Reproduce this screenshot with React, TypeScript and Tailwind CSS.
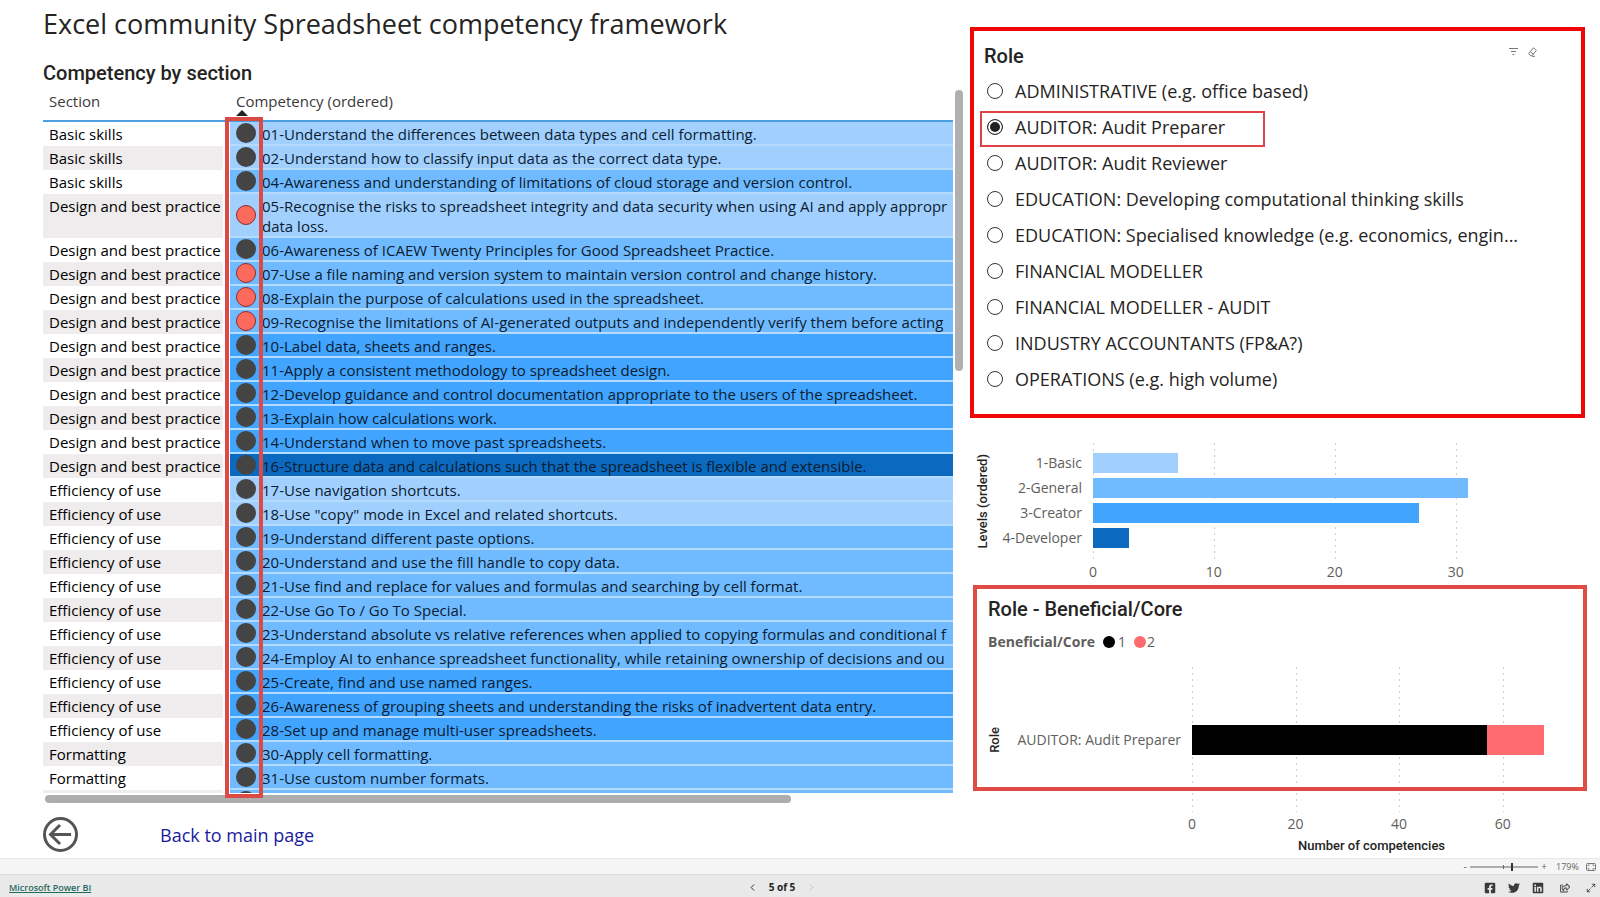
import { useState } from 'react';
import { ChevronLeft, ChevronRight, Maximize2 } from 'lucide-react';
import { FaTwitter, FaLinkedin, FaFacebookSquare, FaRegShareSquare } from 'react-icons/fa';

const levelColors = {
  basic: 'bg-[#a1d0ff]',
  general: 'bg-[#70bbff]',
  creator: 'bg-[#41a4ff]',
  developer: 'bg-[#0b69bf]',
};

type Level = keyof typeof levelColors;

type Competency = {
  section: string;
  text: string;
  level: Level;
  beneficial?: boolean;
};

const BASIC = 'Basic skills';
const DESIGN = 'Design and best practice';
const EFFICIENCY = 'Efficiency of use';
const FORMATTING = 'Formatting';

const competencies: Competency[] = [
  { section: BASIC, level: 'basic', text: '01-Understand the differences between data types and cell formatting.' },
  { section: BASIC, level: 'basic', text: '02-Understand how to classify input data as the correct data type.' },
  { section: BASIC, level: 'general', text: '04-Awareness and understanding of limitations of cloud storage and version control.' },
  {
    section: DESIGN,
    level: 'basic',
    beneficial: true,
    text: '05-Recognise the risks to spreadsheet integrity and data security when using AI and apply appropr\ndata loss.',
  },
  { section: DESIGN, level: 'general', text: '06-Awareness of ICAEW Twenty Principles for Good Spreadsheet Practice.' },
  { section: DESIGN, level: 'general', beneficial: true, text: '07-Use a file naming and version system to maintain version control and change history.' },
  { section: DESIGN, level: 'general', beneficial: true, text: '08-Explain the purpose of calculations used in the spreadsheet.' },
  { section: DESIGN, level: 'general', beneficial: true, text: '09-Recognise the limitations of AI-generated outputs and independently verify them before acting' },
  { section: DESIGN, level: 'creator', text: '10-Label data, sheets and ranges.' },
  { section: DESIGN, level: 'creator', text: '11-Apply a consistent methodology to spreadsheet design.' },
  { section: DESIGN, level: 'creator', text: '12-Develop guidance and control documentation appropriate to the users of the spreadsheet.' },
  { section: DESIGN, level: 'creator', text: '13-Explain how calculations work.' },
  { section: DESIGN, level: 'creator', text: '14-Understand when to move past spreadsheets.' },
  { section: DESIGN, level: 'developer', text: '16-Structure data and calculations such that the spreadsheet is flexible and extensible.' },
  { section: EFFICIENCY, level: 'basic', text: '17-Use navigation shortcuts.' },
  { section: EFFICIENCY, level: 'basic', text: '18-Use "copy" mode in Excel and related shortcuts.' },
  { section: EFFICIENCY, level: 'general', text: '19-Understand different paste options.' },
  { section: EFFICIENCY, level: 'general', text: '20-Understand and use the fill handle to copy data.' },
  { section: EFFICIENCY, level: 'general', text: '21-Use find and replace for values and formulas and searching by cell format.' },
  { section: EFFICIENCY, level: 'general', text: '22-Use Go To / Go To Special.' },
  { section: EFFICIENCY, level: 'general', text: '23-Understand absolute vs relative references when applied to copying formulas and conditional f' },
  { section: EFFICIENCY, level: 'general', text: '24-Employ AI to enhance spreadsheet functionality, while retaining ownership of decisions and ou' },
  { section: EFFICIENCY, level: 'creator', text: '25-Create, find and use named ranges.' },
  { section: EFFICIENCY, level: 'creator', text: '26-Awareness of grouping sheets and understanding the risks of inadvertent data entry.' },
  { section: EFFICIENCY, level: 'creator', text: '28-Set up and manage multi-user spreadsheets.' },
  { section: FORMATTING, level: 'general', text: '30-Apply cell formatting.' },
  { section: FORMATTING, level: 'general', text: '31-Use custom number formats.' },
  { section: '', level: 'general', text: '' },
];

const roles = [
  'ADMINISTRATIVE (e.g. office based)',
  'AUDITOR: Audit Preparer',
  'AUDITOR: Audit Reviewer',
  'EDUCATION: Developing computational thinking skills',
  'EDUCATION: Specialised knowledge (e.g. economics, engin...',
  'FINANCIAL MODELLER',
  'FINANCIAL MODELLER - AUDIT',
  'INDUSTRY ACCOUNTANTS (FP&A?)',
  'OPERATIONS (e.g. high volume)',
];

const levels: { name: string; count: number; level: Level }[] = [
  { name: '1-Basic', count: 7, level: 'basic' },
  { name: '2-General', count: 31, level: 'general' },
  { name: '3-Creator', count: 27, level: 'creator' },
  { name: '4-Developer', count: 3, level: 'developer' },
];

const LEVEL_MAX = 40.7;
const ROLE_MAX = 75.9;

function GridLines({ ticks, max }: { ticks: number[]; max: number }) {
  return (
    <>
      {ticks.map((tick) => (
        <div
          key={tick}
          className="absolute inset-y-0 w-px bg-[repeating-linear-gradient(to_bottom,#d0d0d0_0_2px,transparent_2px_6px)]"
          style={{ left: `${(tick / max) * 100}%` }}
        >
          <span className="absolute top-full left-0 -translate-x-1/2 text-sm leading-6 text-[#605e5c]">{tick}</span>
        </div>
      ))}
    </>
  );
}

function CompetencyTable() {
  return (
    <div className="relative flex gap-[2px]">
      <div className="min-w-0 flex-1">
        <div className="h-[703px] overflow-hidden">
          <table className="w-full table-fixed border-separate border-spacing-0 text-[15px] leading-5">
            <thead>
              <tr className="h-8 text-left text-[#3b3a39]">
                <th className="w-[187px] border-b-2 border-[#4a9fe3] pb-2 pl-[6px] font-normal">Section</th>
                <th className="relative border-b-2 border-[#4a9fe3] pb-2 pl-[6px] font-normal">
                  Competency (ordered)
                  <svg className="absolute bottom-1 left-[6px]" width="12" height="6" viewBox="0 0 12 6">
                    <path d="M0 6 6 0l6 6z" fill="#222" />
                  </svg>
                </th>
              </tr>
            </thead>
            <tbody>
              {competencies.map((row, i) => (
                <tr key={i} className="h-6 align-top">
                  <td
                    className={`border-r-[7px] border-white pt-[2px] pl-[6px] whitespace-nowrap text-black ${
                      i % 2 ? 'bg-[#eeecec]' : 'bg-white'
                    }`}
                  >
                    {row.section}
                  </td>
                  <td className={`border-b-2 border-[#b5dbff] p-0 text-[#0b1c30] ${levelColors[row.level]}`}>
                    <div className="flex items-center gap-[6px] pl-[6px]">
                      <span
                        className={`size-5 shrink-0 rounded-full ${
                          row.beneficial ? 'border border-[#8f2a2a] bg-[#fb6a5c]' : 'bg-[#444]'
                        }`}
                      />
                      <span className="min-h-[22px] pt-[2px] whitespace-pre">{row.text}</span>
                    </div>
                  </td>
                </tr>
              ))}
            </tbody>
          </table>
        </div>
        <div className="mt-[2px] ml-[2px] h-2 w-[82%] rounded-full bg-[#adadad]" />
      </div>
      <div className="h-[281px] w-2 rounded-full bg-[#b0b0b0]" />
      <div className="pointer-events-none absolute top-[27px] left-[182px] h-[681px] w-[38px] border-4 border-[#dc4a45]" />
    </div>
  );
}

function RoleSlicer() {
  const [selected, setSelected] = useState(roles[1]);

  return (
    <fieldset className="h-[391px] border-4 border-[#f00606] pt-2 pr-[14px] pl-[6px]">
      <div className="mb-[2px] flex h-[34px] items-center justify-between pr-[30px] pl-1">
        <h2 className="font-[Roboto,sans-serif] text-xl font-medium text-[#252423]">Role</h2>
        <div className="flex items-center gap-[10px] pb-2 text-[#777]">
          <button type="button" aria-label="Filters">
            <svg width="9" height="8" viewBox="0 0 9 8" stroke="currentColor">
              <path d="M0 .5h9M2 3.500h5M3.500 6.500h2" />
            </svg>
          </button>
          <button type="button" aria-label="Clear selections">
            <svg width="9" height="10" viewBox="0 0 9 10" fill="none" stroke="currentColor">
              <path d="M5.500.700 8.300 3.500 3.800 8.800H2.500L.600 6.500zM2.300 4.600l3 2.600M4 9.300h3" />
            </svg>
          </button>
        </div>
      </div>
      {roles.map((role) => (
        <label
          key={role}
          className={`flex h-9 items-center gap-3 border-2 pb-1 pl-[5px] text-lg whitespace-nowrap text-[#252423] ${
            role === selected ? 'w-[285px] border-[#e04347]' : 'border-transparent'
          }`}
        >
          <input
            type="radio"
            name="role"
            checked={role === selected}
            onChange={() => setSelected(role)}
            className="size-4 shrink-0 appearance-none rounded-full border border-[#333] bg-white checked:bg-[#222] checked:shadow-[inset_0_0_0_2px_white]"
          />
          {role}
        </label>
      ))}
    </fieldset>
  );
}

function LevelsChart() {
  return (
    <section className="flex h-[167px] pt-[25px]">
      <div className="flex h-[117px] w-[26px] items-center justify-center font-[Roboto,sans-serif] text-[13px] font-medium text-[#252423]">
        <span className="rotate-180 whitespace-nowrap [writing-mode:vertical-rl]">Levels (ordered)</span>
      </div>
      <div className="flex w-[86px] flex-col gap-[5px] pt-[10px] text-right text-sm leading-5 text-[#605e5c]">
        {levels.map((item) => (
          <span key={item.name}>{item.name}</span>
        ))}
      </div>
      <div className="relative ml-[11px] h-[117px] flex-1">
        <GridLines ticks={[0, 10, 20, 30]} max={LEVEL_MAX} />
        <div className="relative flex flex-col gap-[5px] pt-[10px]">
          {levels.map((item) => (
            <div
              key={item.name}
              className={`h-5 ${levelColors[item.level]}`}
              style={{ width: `${(item.count / LEVEL_MAX) * 100}%` }}
            />
          ))}
        </div>
      </div>
    </section>
  );
}

function RoleChart() {
  return (
    <section className="relative -mr-[2px] ml-[3px] pl-[15px]">
      <div className="pointer-events-none absolute inset-x-0 top-0 z-10 h-[206px] border-4 border-[#e04b45]" />
      <h2 className="pt-[10px] font-[Roboto,sans-serif] text-xl leading-7 font-medium text-[#252423]">
        Role - Beneficial/Core
      </h2>
      <div className="flex h-[38px] items-center text-sm text-[#605e5c]">
        <span className="font-bold">Beneficial/Core</span>
        <span className="ml-2 size-3 rounded-full bg-black" />
        <span className="ml-[3px]">1</span>
        <span className="ml-2 size-3 rounded-full bg-[#ff6b6e]" />
        <span className="ml-[1px]">2</span>
      </div>
      <div className="mt-[6px] flex h-[145px] pr-[2px]">
        <div className="flex w-[13px] items-center justify-center font-[Roboto,sans-serif] text-[13px] font-medium text-[#252423]">
          <span className="rotate-180 [writing-mode:vertical-rl]">Role</span>
        </div>
        <div className="flex w-[180px] items-center justify-end text-sm whitespace-nowrap text-[#605e5c]">
          AUDITOR: Audit Preparer
        </div>
        <div className="relative ml-[11px] flex-1">
          <GridLines ticks={[0, 20, 40, 60]} max={ROLE_MAX} />
          <div className="relative flex h-full items-center">
            <div className="h-[30px] bg-black" style={{ width: `${(57 / ROLE_MAX) * 100}%` }} />
            <div className="h-[30px] bg-[#ff6b6e]" style={{ width: `${(11 / ROLE_MAX) * 100}%` }} />
          </div>
        </div>
      </div>
      <p className="mt-6 pr-9 pl-[204px] text-center font-[Roboto,sans-serif] text-[13px] leading-5 font-medium text-[#252423]">
        Number of competencies
      </p>
    </section>
  );
}

function ZoomBar() {
  return (
    <div className="flex h-4 items-center justify-end border-t border-[#e8e8e8] bg-[#f5f5f5] pr-1 text-[10px] text-[#666]">
      <button type="button" aria-label="Zoom out" className="w-[6px]">-</button>
      <svg width="68" height="10" viewBox="0 0 68 10" className="mx-[2px]">
        <path d="M0 5h68" stroke="#666" />
        <path d="M33.500 3v4" stroke="#666" />
        <path d="M42 1v8" stroke="#333" strokeWidth="2" />
      </svg>
      <button type="button" aria-label="Zoom in" className="w-2">+</button>
      <span className="ml-2 w-6 text-[9px]">179%</span>
      <button type="button" aria-label="Fit to page" className="ml-[6px]">
        <svg width="10" height="8" viewBox="0 0 10 8" fill="none" stroke="#777">
          <rect x=".5" y=".5" width="9" height="7" rx="1" />
          <path d="M2 3V2h1.500M6.500 2H8v1M8 5v1H6.500M3.500 6H2V5" />
        </svg>
      </button>
    </div>
  );
}

function StatusBar() {
  return (
    <footer className="grid h-[23px] grid-cols-3 items-center border-t border-[#dadada] bg-[#e9e9e9] text-[10px] text-[#222]">
      <a href="#powerbi" className="justify-self-start pt-1 pl-[9px] text-[9px] font-semibold text-[#1f6b60] underline">
        Microsoft Power BI
      </a>
      <div className="flex items-center justify-self-center pt-[2px] pr-9">
        <button type="button" aria-label="Previous page"><ChevronLeft size={11} /></button>
        <span className="px-[11px] font-bold">5 of 5</span>
        <button type="button" aria-label="Next page" className="text-[#c4c4c4]"><ChevronRight size={11} /></button>
      </div>
      <div className="flex items-center gap-3 justify-self-end pt-[3px] pr-1 text-[#3a3a3a]">
        <a href="#facebook" aria-label="Facebook"><FaFacebookSquare size={12} /></a>
        <a href="#twitter" aria-label="Twitter"><FaTwitter size={12} /></a>
        <a href="#linkedin" aria-label="LinkedIn"><FaLinkedin size={12} /></a>
        <button type="button" aria-label="Share" className="ml-1"><FaRegShareSquare size={10} /></button>
        <button type="button" aria-label="Full screen" className="ml-1"><Maximize2 size={10} /></button>
      </div>
    </footer>
  );
}

export default function App() {
  return (
    <div className="flex min-h-screen flex-col bg-white font-['Open_Sans','Noto_Sans',sans-serif]">
      <main className="grid flex-1 grid-cols-[963fr_637fr]">
        <div className="min-w-0 pl-[43px]">
          <h1 className="h-12 text-[27px] leading-[48px] text-[#252423]">
            Excel community Spreadsheet competency framework
          </h1>
          <h2 className="h-[42px] pt-1 font-[Roboto,sans-serif] text-xl leading-[42px] font-medium text-[#252423]">
            Competency by section
          </h2>
          <CompetencyTable />
          <div className="flex items-center gap-[82px] pt-[14px]">
            <button type="button" aria-label="Back">
              <svg width="35" height="35" viewBox="0 0 35 35" fill="none" stroke="#555" strokeWidth="3">
                <circle cx="17.500" cy="17.500" r="16" />
                <path d="M28 17.500H8M17 8l-9.500 9.500L17 27" />
              </svg>
            </button>
            <a href="#main" className="text-lg text-[#1a1a9e]">Back to main page</a>
          </div>
        </div>
        <div className="min-w-0 pt-[27px] pr-[15px] pl-[7px]">
          <RoleSlicer />
          <LevelsChart />
          <RoleChart />
        </div>
      </main>
      <ZoomBar />
      <StatusBar />
    </div>
  );
}
